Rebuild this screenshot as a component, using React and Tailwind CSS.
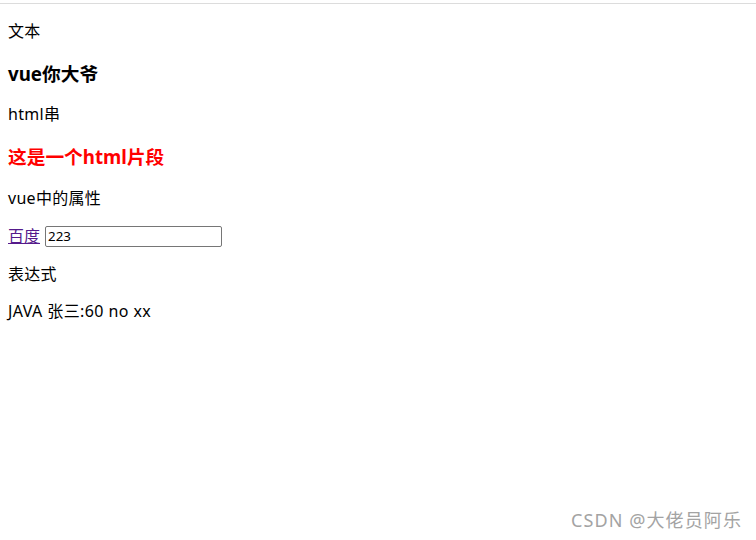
export default function App() {
  const font = { fontFamily: '"Noto Sans", "Noto Sans CJK SC", sans-serif' };
  return (
    <div className="relative w-[756px] h-[540px] bg-white overflow-hidden text-black" style={font}>
      <div className="mt-[3px] h-px bg-[#dcdcdc]" />
      <div className="px-2 pt-px">
        <p className="mt-4 mb-4 text-[16px] leading-[21px] tracking-[0.3px]">文本</p>
        <h3 className="mt-[18.72px] mb-[18.72px] text-[18.72px] font-bold leading-[25px]">vue你大爷</h3>
        <p className="mb-4 text-[16px] leading-[21px] tracking-[0.3px]">html串</p>
        <h3 className="mt-[18.72px] mb-[18.72px] text-[18.72px] font-bold leading-[25px] text-[#ff0000]">这是一个html片段</h3>
        <p className="mb-4 text-[16px] leading-[21px] tracking-[0.3px]">vue中的属性</p>
        <p className="mb-4 flex items-center gap-[5px] h-[23px] text-[16px] leading-[21px]">
          <a href="#" className="text-[#551a8b] underline">百度</a>
          <input
            type="text"
            defaultValue="223"
            className="w-[177px] h-[21px] border border-[#767676] rounded-[2px] px-[2px] text-[13.33px] leading-[17px] outline-none"
          />
        </p>
        <p className="mb-4 text-[16px] leading-[21px] tracking-[0.3px]">表达式</p>
        <p className="mb-4 text-[16px] leading-[21px] tracking-[0.4px]">JAVA 张三:60 no xx</p>
      </div>
      <div className="absolute right-[14px] bottom-[6px] text-[18px] tracking-[1.1px] text-[#a3a3a3]">CSDN @大佬员阿乐</div>
    </div>
  );
}
